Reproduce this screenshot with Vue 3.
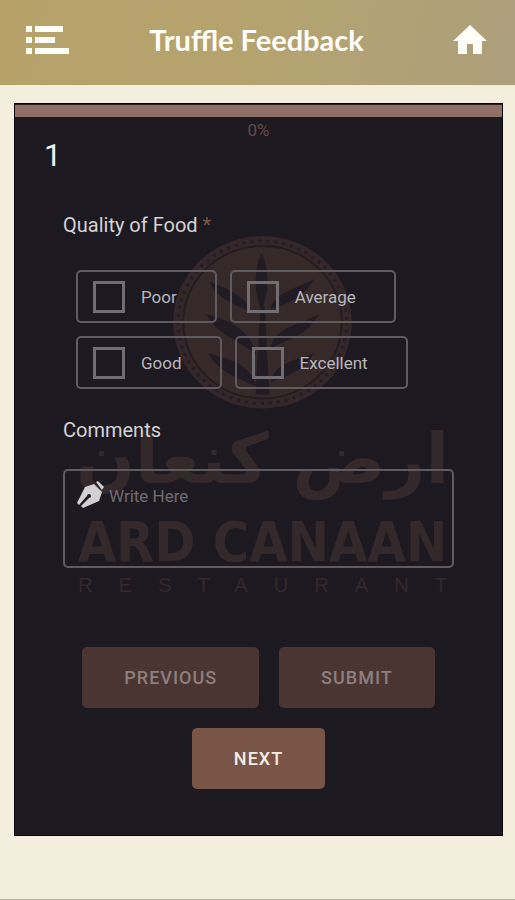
<script setup>
import { ref } from 'vue'

const title = 'Truffle Feedback'
const progress = ref(0)
const step = ref(1)
const comments = ref('')
const selected = ref([])

const options = ['Poor', 'Average', 'Good', 'Excellent']

// leaves of the emblem, top to bottom, left and right
const leaves = [
  'M174 77 C164 70 140 66 131 46 C146 50 170 62 174 77 Z',
  'M192 73 C196 56 220 52 235 43 C226 62 208 68 192 73 Z',
  'M178 118 C160 104 138 98 128 78 C146 82 172 92 178 118 Z',
  'M192 112 C196 90 224 88 240 78 C230 98 212 102 192 112 Z',
  'M178 150 C160 142 140 136 130 117 C146 122 172 126 178 150 Z',
  'M192 146 C196 126 218 124 235 117 C226 134 208 140 192 146 Z'
]
</script>

<template>
  <div class="page">
    <header class="topbar">
      <button class="icon-btn" type="button" aria-label="Menu">
        <svg width="44" height="30" viewBox="0 0 44 30" fill="currentColor">
          <path d="M0 1h6v6H0zM9 1h28v6H9zM0 12h6v6H0zM9 12h20v6H9zM0 23h6v6H0zM9 23h34v6H9z" />
        </svg>
      </button>
      <h1 class="title">{{ title }}</h1>
      <button class="icon-btn home" type="button" aria-label="Home">
        <svg width="34" height="30" viewBox="0 0 34 30" fill="currentColor">
          <path d="M17 0 34 16H29V29H20V19H14V29H5V16H0Z" />
        </svg>
      </button>
    </header>

    <main class="card">
      <svg class="watermark" viewBox="0 0 367 360" aria-hidden="true">
        <ellipse cx="184" cy="86" rx="89" ry="86" class="brown" />
        <ellipse cx="184" cy="86" rx="84" ry="81" class="beads" />
        <ellipse cx="184" cy="86" rx="79" ry="76" class="ring" />
        <path class="leaf" d="M183 17 C175 34 175 56 183 74 C191 56 191 34 183 17 Z" />
        <path class="leaf" d="M182 70H186L191 158H177Z" />
        <path v-for="leaf in leaves" :key="leaf" class="leaf" :d="leaf" />
        <text x="184" y="246" class="arabic">ارض كنعان</text>
        <text x="184" y="324" class="latin">ARD CANAAN</text>
        <text x="0" y="355" class="sub">RESTAURANT</text>
      </svg>

      <div class="progress">
        <div class="progress-bar" :style="{ width: progress + '%' }"></div>
      </div>
      <div class="percent">{{ progress }}%</div>
      <div class="step">{{ step }}</div>

      <form class="form" @submit.prevent>
        <fieldset class="question">
          <legend class="label">Quality of Food <span class="required">*</span></legend>
          <div class="options">
            <label v-for="option in options" :key="option" class="option">
              <input v-model="selected" type="checkbox" :value="option" class="check">
              <span>{{ option }}</span>
            </label>
          </div>
        </fieldset>

        <label class="label" for="comments">Comments</label>
        <div class="comment-box">
          <svg class="pen" width="28" height="28" viewBox="0 0 28 28" fill="currentColor">
            <path d="M19 1 21 0 27 6 25 9Z" />
            <path d="M17 3 25 11 22 20 6 27 4 25 12 17A2 2 0 1 0 10 15L2 24 0 22 8 6Z" />
          </svg>
          <textarea id="comments" v-model="comments" placeholder="Write Here"></textarea>
        </div>

        <div class="actions">
          <button class="btn" type="button" disabled>PREVIOUS</button>
          <button class="btn" type="submit" disabled>SUBMIT</button>
          <button class="btn" type="button">NEXT</button>
        </div>
      </form>
    </main>
  </div>
</template>

<style>
body {
  margin: 0;
  background: #f4eedd;
}
</style>

<style scoped>
* {
  box-sizing: border-box;
}

.page {
  min-height: 100vh;
  background: #f4eedd;
  border-bottom: 1px solid #b5afa2;
  font-family: Roboto, "Liberation Sans", sans-serif;
  color: #d5d3d6;
}

/* --- TOP BAR --- */
.topbar {
  display: grid;
  grid-template-columns: 1fr auto 1fr;
  align-items: center;
  height: 85px;
  padding: 0 28px 6px 26px;
  background: linear-gradient(100deg, #b7a169 0%, #b5a36f 50%, #ad9f7c 100%);
  color: #fffef8;
}

.title {
  margin: 0;
  font-family: Lato, "Open Sans", sans-serif;
  font-size: 29px;
  font-weight: 700;
}

.icon-btn {
  display: flex;
  padding: 0;
  border: 0;
  background: none;
  color: inherit;
  cursor: pointer;
}

.home {
  justify-self: end;
}

/* --- CARD --- */
.card {
  position: relative;
  margin: 18px 12px 0 14px;
  padding-bottom: 46px;
  background: #1d1920;
  border: 1px solid #08050c;
}

.progress {
  height: 13px;
  border-top: 1px solid #2c1c20;
  background: #8e7066;
}

.progress-bar {
  height: 100%;
  background: #795547;
}

.percent {
  margin-top: 3px;
  font-size: 17px;
  line-height: 20px;
  text-align: center;
  color: #644b47;
}

.step {
  padding-left: 29px;
  font-size: 31px;
  line-height: 32px;
  color: #f2f1f2;
}

/* --- WATERMARK --- */
.watermark {
  position: absolute;
  top: 132px;
  left: 63px;
  width: calc(100% - 119px);
  overflow: visible;
}

.brown {
  fill: #33272a;
}

.beads {
  fill: none;
  stroke: #241d23;
  stroke-width: 3;
  stroke-dasharray: 3 5;
}

.ring {
  fill: #35292a;
  stroke: #251c21;
  stroke-width: 2;
}

.leaf {
  fill: #211c23;
}

.arabic,
.latin,
.sub {
  fill: #33282a;
  text-anchor: middle;
}

.arabic {
  font-family: "DejaVu Sans", sans-serif;
  font-size: 69px;
  font-weight: 700;
}

.latin {
  font-family: "DejaVu Sans Condensed", "DejaVu Sans", sans-serif;
  font-size: 55px;
  font-weight: 700;
}

.sub {
  font-family: "Liberation Sans", sans-serif;
  font-size: 20px;
  letter-spacing: 26px;
  text-anchor: start;
}

/* --- FORM --- */
.form {
  position: relative;
  padding: 40px 48px 0;
}

.question {
  margin: 0 0 28px;
  padding: 0;
  border: 0;
}

.label {
  display: block;
  padding: 0;
  font-size: 20px;
  line-height: 26px;
}

.required {
  color: #795547;
}

.options {
  display: flex;
  flex-wrap: wrap;
  gap: 13px;
  padding: 32px 13px 0;
}

.option {
  display: flex;
  align-items: center;
  gap: 16px;
  height: 53px;
  padding: 0 38px 0 15px;
  border: 2px solid #5f5b61;
  border-radius: 5px;
  font-size: 17px;
  color: #b9b7bb;
  cursor: pointer;
}

.check {
  appearance: none;
  width: 32px;
  height: 32px;
  margin: 0;
  border: 3px solid #716e73;
}

.check:checked {
  background: #795547;
}

.comment-box {
  position: relative;
  margin-top: 26px;
}

.comment-box textarea {
  display: block;
  width: 100%;
  height: 99px;
  padding: 14px 14px 14px 44px;
  border: 2px solid #5f5b61;
  border-radius: 5px;
  background: transparent;
  font: inherit;
  font-size: 17px;
  line-height: 22px;
  color: #d5d3d6;
  resize: none;
}

.comment-box textarea::placeholder {
  color: #716d72;
  opacity: 1;
}

.pen {
  position: absolute;
  top: 12px;
  left: 14px;
  color: #d2d0d2;
}

/* --- BUTTONS --- */
.actions {
  display: flex;
  flex-wrap: wrap;
  justify-content: center;
  gap: 20px;
  margin-top: 79px;
}

.btn {
  height: 61px;
  padding: 0 42px;
  border: 0;
  border-radius: 5px;
  background: #795547;
  font: inherit;
  font-size: 18px;
  font-weight: 500;
  letter-spacing: 1px;
  color: #f5ece4;
  cursor: pointer;
}

.btn:disabled {
  background: #4a3533;
  color: #8d7f7f;
  cursor: default;
}
</style>
